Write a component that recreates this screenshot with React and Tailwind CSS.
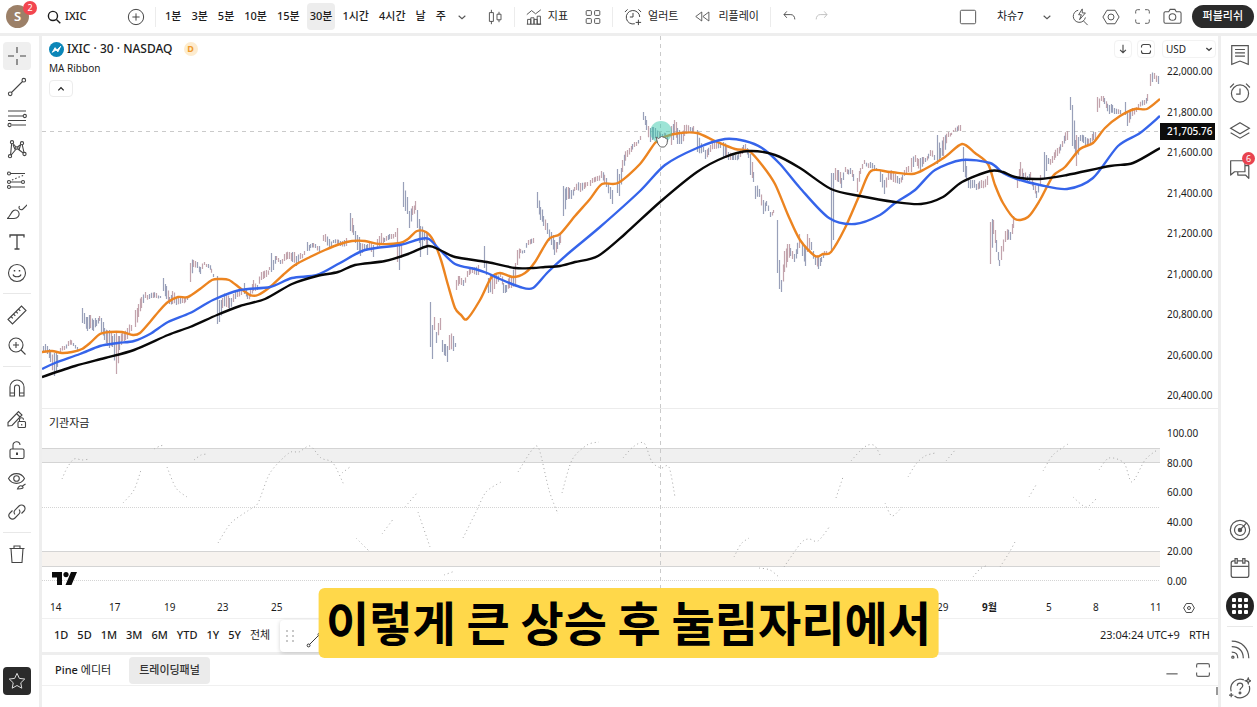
import React from "react";

/* ---------- chart data (x, high, low) ---------- */
const SESSIONS = [
  "43 346 353,47 346 354,50 352 362,54 353 376,57 355 367",
  "60 348 352,64 346 350,68 341 346,73 343 346,77 347 351",
  "82 308 323,84 313 324,87 317 331,90 315 328,93 320 331,96 320 326,99 316 321,101 318 332,104 328 340,109 330 348,112 336 347,116 332 374,119 336 350,122 333 341,127 328 339,131 325 331",
  "135 310 327,138 304 317,141 297 308,145 292 298,149 294 299,156 293 298,160 296 298",
  "163 278 291,166 286 299,169 297 304,172 291 304,176 298 305,182 296 303,187 296 300",
  "190 263 282,193 260 267,197 262 268,200 267 274,204 262 265,208 264 268,213 274 277",
  "217 276 324,219 300 322,222 298 308,226 293 307,229 298 309,233 294 302,237 291 297,241 289 295",
  "244 283 294,247 294 299,250 290 297,253 280 291,257 285 290,261 272 280,266 270 277,269 267 270",
  "271 253 272,273 260 270,276 256 260,280 260 264,284 254 261,289 252 259,292 252 262,296 256 266,300 253 259,304 251 255",
  "307 242 251,310 244 248,315 244 248,319 246 252",
  "323 235 241,325 234 242,329 239 249,333 240 243,340 241 246,346 238 246",
  "350 213 231,353 225 235,357 235 250,360 243 256,364 244 250,369 241 248,373 245 257",
  "377 239 249,381 233 243,384 238 242,391 234 239,395 232 237,397 228 262,399 246 270,401 245 258",
  "403 182 207,407 197 214,409 211 228,412 206 215,415 201 210,417 210 228,420 226 257,424 231 241,427 232 255",
  "430 302 347,432 325 359,434 317 330,436 332 343,440 318 330,442 340 352,445 344 356,447 346 362,449 335 350,453 336 351,455 343 347",
  "456 280 290,459 276 284,463 280 286,467 271 277,472 267 273,478 265 275",
  "484 246 268,486 262 275,488 278 293,492 276 294,496 275 284,500 272 277,503 283 293,506 285 292,509 276 288",
  "511 276 288,515 263 285,517 250 265,520 249 253,524 250 253,528 240 245,533 238 243",
  "537 192 208,540 207 220,543 216 226,547 223 234,551 232 245,554 240 255,557 242 249,560 235 243",
  "563 186 216,566 187 200,571 190 199,574 187 191,580 183 192,587 182 186",
  "590 180 186,592 178 183,597 176 181,601 171 178,606 178 187,612 190 204",
  "617 169 193,619 174 196,622 160 172,627 150 157,634 142 147,640 136 140",
  "643 112 120,646 120 130,650 128 142,655 128 138,662 134 142,667 136 142",
  "671 126 145,674 120 134,677 128 144,681 132 144,684 125 136,690 127 131,693 126 133",
  "697 130 152,703 147 152,705 150 159,710 145 152,714 140 149,720 143 148",
  "723 142 158,728 152 160,735 155 160,740 150 157,745 144 150,748 150 158",
  "750 154 175,753 172 182,755 186 199,759 189 197,763 200 214,766 201 206,770 212 217,773 210 213",
  "777 220 273,779 260 289,781 280 292,784 251 272,787 244 262,790 248 256,794 254 262,799 234 248",
  "802 242 256,805 247 266,807 234 252,811 242 250,815 256 265,818 257 269,821 257 262,826 251 254",
  "831 173 250,833 173 240,835 168 180,838 170 182,841 178 188,845 167 172,850 168 174,853 174 181",
  "857 178 192,860 168 174,864 160 164,870 162 168,876 168 171",
  "880 170 182,884 180 194,888 173 180,893 172 182,899 178 184,904 170 176,908 166 172",
  "911 158 172,915 155 162,920 158 170,925 158 162,930 150 156,934 155 160",
  "937 135 164,940 148 158,943 137 156,948 132 137,953 130 132,960 125 131",
  "963 147 172,966 166 180,968 178 188,972 180 188,976 184 190,981 180 188,987 176 185",
  "990 222 264,993 220 234,996 240 252,999 260 266,1001 246 260,1005 231 242,1010 232 240,1013 216 228",
  "1017 178 188,1020 162 176,1023 173 180,1027 176 182,1030 172 180,1033 182 190,1036 191 198,1040 175 186",
  "1044 152 178,1048 158 164,1052 156 163,1057 148 156,1062 141 147,1067 131 140",
  "1070 97 110,1072 105 146,1075 140 154,1076 135 166,1080 135 141,1085 137 145,1090 138 144,1095 132 140",
  "1097 97 112,1101 96 101,1104 98 104,1109 105 114,1114 108 114,1120 110 114",
  "1125 102 115,1127 112 126,1132 108 116,1138 104 108,1144 100 105,1147 94 101",
  "1150 74 86,1154 73 79,1158 76 84",
];

const MA = {
  fast: "42,352 52,351 62,353 72,352 82,349 90,343 100,334 110,332 122,332 133,335 140,333 150,322 160,310 168,302 178,297 188,297 200,289 212,280 220,279 229,280 240,288 250,295 258,295 270,287 283,275 295,265 310,257 325,250 340,244 352,241 365,241 380,244 400,243 408,239 417,231 426,232 433,240 441,260 448,285 455,308 461,315 467,319 480,300 491,278 500,273 513,277 525,273 535,262 549,239 560,234 575,216 590,199 602,184 618,183 640,164 655,143 664,137 680,133 697,133 715,141 735,149 749,151 762,165 775,184 788,215 800,240 815,256 823,254 831,252 845,228 860,194 871,171 890,172 912,174 925,169 945,157 962,144 975,153 988,164 995,185 1003,203 1015,219 1028,217 1040,200 1053,176 1065,167 1080,149 1093,143 1105,128 1120,116 1135,109 1147,109 1160,99",
  mid: "42,369 55,363 80,354 100,346 118,343 134,341 150,334 168,322 190,313 213,300 240,290 270,287 292,278 317,275 340,263 365,250 400,245 420,239 429,239 440,250 455,264 475,269 487,273 500,279 520,287 533,288 548,272 570,252 600,227 640,191 665,165 697,148 725,139 745,141 762,148 780,164 800,188 829,218 855,224 880,215 895,203 915,190 935,170 962,160 990,163 1003,173 1017,179 1040,185 1067,189 1093,178 1118,146 1140,133 1160,116",
  slow: "42,377 75,366 105,358 134,350 168,335 190,327 217,315 240,306 265,299 292,284 317,276 338,272 355,265 385,261 408,254 428,246 440,250 455,257 487,262 515,268 533,268 545,267 560,266 575,262 598,256 625,234 660,202 697,172 725,157 749,151 775,155 800,168 831,189 860,196 895,202 921,204 943,197 962,182 990,171 1003,172 1015,177 1040,179 1067,175 1110,166 1133,163 1160,148",
};

const OSCILLATOR = [
  "62,479 67,468 74,459 82,460 90,459",
  "123,503 134,490 141,470",
  "154,449 160,446 165,445",
  "167,467 176,488 187,497",
  "194,460 201,455 208,454",
  "218,543 231,523 249,510 258,503 270,473 289,453 299,452 310,446 321,458 333,463 344,485",
  "342,473 350,467",
  "356,538 370,552",
  "382,534 394,518",
  "405,507 417,493",
  "418,512 430,547",
  "444,575 455,571",
  "463,538 476,512 486,492 501,482",
  "518,472 532,450 539,449 549,490 558,514",
  "562,493 572,460 587,445 599,442",
  "623,458 633,447 644,443 652,462 661,468 669,467 675,497",
  "734,557 741,544 749,538",
  "759,568 770,570 780,578",
  "784,567 801,543 809,539 818,541 830,526",
  "836,498 843,477",
  "851,461 860,451 868,445 875,446 881,457",
  "885,503 892,516 902,507",
  "908,477 916,464 925,456 935,453",
  "946,461 956,449",
  "973,577 980,569 988,565",
  "1000,567 1009,553 1016,540",
  "1029,497 1036,485",
  "1043,471 1053,455 1068,444",
  "1073,497 1086,507 1097,498",
  "1099,470 1109,458 1124,463 1132,482 1145,460 1157,450",
];

function buildBars() {
  const bars = [];
  SESSIONS.forEach((session, s) => {
    const keys = session.split(",").map((k) => k.split(" ").map(Number));
    keys.forEach(([x, hi, lo], i) => {
      const next = keys[i + 1];
      const prev = keys[i - 1] || keys[i + 1];
      const rising = i === 0 ? next[1] < hi : hi < prev[1];
      bars.push({ x, hi, lo, rising });
      if (next && next[0] - x > 2) {
        const n = Math.round((next[0] - x) / 2);
        for (let j = 1; j < n; j++) {
          const t = j / n;
          const wob = ((i * 7 + j * 5 + s) % 5) - 2;
          bars.push({
            x: Math.round(x + (next[0] - x) * t),
            hi: hi + (next[1] - hi) * t + wob,
            lo: lo + (next[2] - lo) * t + wob * 0.6,
            rising: (i + j + s) % 3 === 0 ? !rising : rising,
          });
        }
      }
    });
  });
  return bars;
}
const BARS = buildBars();
const barPath = (rising) =>
  BARS.filter((b) => b.rising === rising)
    .map((b) => `M${b.x + 0.5} ${b.hi.toFixed(1)}V${b.lo.toFixed(1)}`)
    .join("");

/* Catmull-Rom spline through the given points */
function smooth(points) {
  const p = points.split(" ").map((s) => s.split(",").map(Number));
  let d = `M${p[0][0]} ${p[0][1]}`;
  for (let i = 0; i < p.length - 1; i++) {
    const a = p[i - 1] || p[i];
    const b = p[i];
    const c = p[i + 1];
    const e = p[i + 2] || c;
    const k = 7;
    d += `C${b[0] + (c[0] - a[0]) / k} ${b[1] + (c[1] - a[1]) / k} ${c[0] - (e[0] - b[0]) / k} ${c[1] - (e[1] - b[1]) / k} ${c[0]} ${c[1]}`;
  }
  return d;
}

/* ---------- icons ---------- */
function Icon({ className = "size-5", children, box = "0 0 20 20" }) {
  return (
    <svg viewBox={box} className={`shrink-0 ${className}`} fill="none" stroke="currentColor" strokeWidth="1.1" aria-hidden="true">
      {children}
    </svg>
  );
}

const TOOLS = [
  [
    ["십자선", <path d="M10 1v6M10 13v6M1 10h6M13 10h6" />],
    ["추세선", <><circle cx="3.2" cy="16.8" r="1.8" /><circle cx="16.8" cy="3.2" r="1.8" /><path d="M4.5 15.5l11-11" /></>],
    ["피보나치", <><path d="M1 3h18M1 8h15M1 12.5h18M5 17h14" /><circle cx="17.8" cy="8" r="1.6" /><circle cx="2.6" cy="17" r="1.6" /></>],
    ["패턴", <><path d="M3.6 15.600L4.600 4.800M6 4.500l3 3.500M10.800 10l5.500 4M4.200 16l5-6M10.500 8L13.800 5.500M15.300 6l1.700 7.500" /><path d="M6 5.500l2 5M13.500 6L12 11" /><circle cx="5" cy="3.2" r="1.6" /><circle cx="15" cy="4.2" r="1.6" /><circle cx="3" cy="17.2" r="1.6" /><circle cx="17.5" cy="15" r="1.6" /><circle cx="9.800" cy="9" r="1.200" /></>],
    ["예측", <><path d="M3.500 3.500H18M3.500 12h11M3.500 17H18" /><path d="M5 10L17 5" strokeDasharray="1.500 2" /><circle cx="2" cy="3.500" r="1.500" /><circle cx="2" cy="12" r="1.500" /><circle cx="2" cy="17" r="1.500" /><circle cx="16" cy="12" r="1.500" /></>],
    ["브러시", <><path d="M0 17.500c3-1 3.500-6 6.500-8 2.500-1.500 5 .3 5.500 2.500.5 2.500-1 5.500-5 5.500z" /><path d="M12.500 5c-1.500 2.500 1 5 3.500 3L21 3" /></>],
    ["텍스트", <path d="M3 5.500V3h14v2.500M10 3v14M7.500 17h5" strokeWidth="1.300" />],
    ["이모지", <><circle cx="10" cy="10" r="8.500" /><path d="M6 11.500c1 3 7 3 8 0" /><path d="M7.500 7v1.500M12.500 7v1.500" strokeWidth="1.500" /></>],
  ],
  [
    ["자", <path d="M1 14.500L14.500 1 19 5.500 5.500 19zM4 11.500l1.800 1.800M6.500 9l1.800 1.800M9 6.500l1.800 1.800M11.500 4l1.800 1.800" />],
    ["확대", <><circle cx="9" cy="9" r="7" /><path d="M14 14l4.500 4.500M9 6v6M6 9h6" /></>],
  ],
  [
    ["자석", <><path d="M3 18V9a7 7 0 0114 0v9h-4.500V9.500a2.500 2.500 0 00-5 0V18z" /><path d="M3 15h4.500M12.500 15H17" /></>],
    ["그리기 유지", <><path d="M1 13.500L11.500 2.500l3.500 3.500L5 16.500l-4 .5zM9.500 4.500L13 8" /><rect x="11" y="12.500" width="7.500" height="6" rx="1" /><path d="M12.500 12.500v-1.800a2 2 0 014 0M14.700 15v1.500" /></>],
    ["잠금", <><rect x="3" y="9" width="14" height="9.500" rx="1.500" /><path d="M6 9V5.500a3.500 3.500 0 017-.5" /><path d="M10 12.500v2.500" strokeWidth="2" /></>],
    ["숨기기", <><path d="M1.500 7.500C5 1 14 1 17.500 7.500 14 14 5 14 1.500 7.500z" /><circle cx="9.500" cy="7.500" r="2.800" /><path d="M10.500 18c1-3 3.500-4 5-2.500s0 2.500-5 2.500zM15.500 15l3-2" /></>],
    ["링크", <path d="M8 12.500a3.500 3.500 0 010-4.500l4-4a3.400 3.400 0 015 5l-2.500 2.500M12 7.500a3.500 3.500 0 010 4.500l-4 4a3.400 3.400 0 01-5-5L5.500 8.500" />],
  ],
  [["삭제", <path d="M2.500 4.500h15M4 4.500l1 14h10l1-14M7 4.500V2h6v2.500" />]],
];

const RAIL_TOP = [
  ["관심종목", <path d="M2.500 1.500h15v17L10 15.500l-7.500 3zM5.500 5h9M5.500 8h9M5.500 11h9" />],
  ["얼러트", <><circle cx="10" cy="10.500" r="7.800" /><path d="M10 6v5H6.500M1 5l3.500-3.500M19 5l-3.500-3.500" /></>],
  ["오브젝트", <path d="M10 2.500l8.500 5-8.500 5-8.500-5zM1.500 11.500l8.500 5 8.500-5" />],
];

function RailButton({ label, children }) {
  return (
    <button aria-label={label} className="flex h-[38px] w-full items-center justify-center text-[#555]">
      <Icon className="size-[22px]">{children}</Icon>
    </button>
  );
}

const Sep = ({ className = "" }) => <span className={`h-5 w-px shrink-0 bg-[#ececec] ${className}`} />;
const Chevron = () => (
  <Icon className="size-2.5 text-[#555]" box="0 0 12 12"><path d="M2 4.500L6 8l4-3.500" strokeWidth="1.300" /></Icon>
);

/* ---------- top bar ---------- */
function TopBar() {
  const intervals = ["1분", "3분", "5분", "10분", "15분", "30분", "1시간", "4시간", "날", "주"];
  return (
    <header className="flex h-[33px] shrink-0 items-center bg-white text-[11px]">
      <button aria-label="프로필" className="relative ml-1.5 mr-[18px] flex size-[23px] shrink-0 items-center justify-center rounded-full bg-[#9c8068] text-[13px] font-semibold text-white">
        S
        <span className="absolute -right-2 -top-1 flex size-[14px] items-center justify-center rounded-full bg-[#f2464f] text-[9px] font-normal">2</span>
      </button>
      <button className="flex w-[75px] items-center gap-1 font-medium">
        <Icon className="size-[14px]"><circle cx="8.500" cy="8.500" r="6.500" strokeWidth="2" /><path d="M13.500 13.500L19 19" strokeWidth="2" /></Icon>
        IXIC
      </button>
      <button aria-label="심볼 추가" className="ml-[5px] text-[#444]">
        <Icon className="size-[18px]"><circle cx="10" cy="10" r="8.500" /><path d="M10 6v8M6 10h8" /></Icon>
      </button>
      <Sep className="mx-[6px] ml-[10px]" />
      <nav className="flex shrink-0 items-center gap-1">
        {intervals.map((t) => (
          <button key={t} className={`h-[27px] whitespace-nowrap rounded px-[3px] font-medium ${t === "30분" ? "bg-[#ededed]" : ""}`}>{t}</button>
        ))}
      </nav>
      <button aria-label="간격 더보기" className="ml-2"><Chevron /></button>
      <button aria-label="캔들" className="ml-5 text-[#444]">
        <Icon className="size-4"><path d="M3 4.500h5v11H3zM5.500 1v3.500M5.500 15.500V19M12.500 6.500h5v7h-5zM15 3.500v3M15 13.500v3" /></Icon>
      </button>
      <Sep className="mx-[11px]" />
      <button className="flex items-center gap-1.5 whitespace-nowrap">
        <Icon className="size-4 text-[#444]"><path d="M1 7l6-5 5 4 6.500-5M2 19v-6h4v6M6 19v-8h4v8M10 19v-6h4v6M14 19V9h4v10zM1 19h18" /></Icon>
        지표
      </button>
      <button aria-label="레이아웃" className="ml-[17px] text-[#444]">
        <Icon className="size-4"><rect x="1.500" y="2" width="6.500" height="6" rx="1" /><rect x="12" y="2" width="6.500" height="6" rx="1" /><rect x="1.500" y="12" width="6.500" height="6" rx="1" /><rect x="12" y="12" width="6.500" height="6" rx="1" /></Icon>
      </button>
      <Sep className="mx-[11px]" />
      <button className="flex items-center gap-1.5 whitespace-nowrap">
        <Icon className="size-[18px] text-[#444]"><path d="M17.500 10A7.500 7.500 0 1012 17.500M10 5.500V10H6.500M1 4.500L4 1.500M19 4.500L16 1.500M16 13v6M13 16h6" /></Icon>
        얼러트
      </button>
      <button className="ml-[17px] flex items-center gap-2 whitespace-nowrap">
        <Icon className="size-[15px] text-[#444]"><path d="M9 4v12l-8-6zM18.500 4v12l-8-6z" /></Icon>
        리플레이
      </button>
      <Sep className="mx-[11px]" />
      <button aria-label="실행 취소" className="text-[#444]"><Icon className="size-4"><path d="M6 3L2.500 7 6 11M2.500 7H11c3 0 5 2.500 5 6" /></Icon></button>
      <button aria-label="다시 실행" className="ml-[15px] text-[#bbb]"><Icon className="size-4"><path d="M14 3l3.500 4L14 11M17.500 7H9c-3 0-5 2.500-5 6" /></Icon></button>

      <div className="ml-auto flex shrink-0 items-center pr-[3px] text-[#555]">
        <button aria-label="레이아웃 선택"><Icon className="size-[18px]"><rect x="1.500" y="2.500" width="17" height="15" rx="1.500" /></Icon></button>
        <button className="ml-5 flex items-center gap-[18px] whitespace-nowrap text-[#131722]">차슈7 <Chevron /></button>
        <button aria-label="빠른 찾기" className="ml-[19px]"><Icon className="size-[18px]"><path d="M8 2.500a6.800 6.800 0 108 8M14 14.500l4.500 4.500M12.500 1L8.500 7.500h3L9.500 13l6.500-7.500h-3.500z" /></Icon></button>
        <button aria-label="설정" className="ml-[13px]"><Icon className="size-[18px]"><path d="M5.500 2.500h9L19 10l-4.500 7.500h-9L1 10z" /><circle cx="10" cy="10" r="3.300" /></Icon></button>
        <button aria-label="전체 화면" className="ml-[14px]"><Icon className="size-[17px]"><path d="M2 6.500V4a2 2 0 012-2h3M13 2h3a2 2 0 012 2v2.500M18 13.500V16a2 2 0 01-2 2h-3M7 18H4a2 2 0 01-2-2v-2.500" /></Icon></button>
        <button aria-label="스냅샷" className="ml-3"><Icon className="size-[19px]"><path d="M2.500 5h3.500l1.500-2.500h5L14 5h3.500A1.500 1.500 0 0119 6.500v9a1.500 1.500 0 01-1.500 1.500h-15A1.500 1.500 0 011 15.500v-9A1.500 1.500 0 012.500 5z" /><circle cx="10" cy="10.500" r="3.500" /></Icon></button>
        <button className="ml-2.5 h-[23px] whitespace-nowrap rounded-full bg-[#2b2b2b] px-[11px] font-medium text-white">퍼블리쉬</button>
      </div>
    </header>
  );
}

/* ---------- side bars ---------- */
function ToolBar() {
  return (
    <aside className="flex w-[39px] shrink-0 flex-col bg-white pb-3 pl-[3px] pt-1 text-[#444]">
      {TOOLS.map((group, g) => (
        <div key={g} className="flex flex-col">
          {g > 0 && <hr className="my-[5px] w-7 border-[#e8e8e8]" />}
          {group.map(([label, art], i) => (
            <button key={label} aria-label={label} className="flex h-[31px] w-7 items-center justify-center">
              <span className={`flex size-7 items-center justify-center rounded ${g === 0 && i === 0 ? "bg-[#efefef]" : ""}`}>
                <Icon>{art}</Icon>
              </span>
            </button>
          ))}
        </div>
      ))}
      <button aria-label="즐겨찾기 툴바" className="mt-auto flex size-7 items-center justify-center rounded bg-[#2b2b2b] text-[#ddd]">
        <Icon className="size-[18px]"><path d="M10 1.500l2.600 5.600 6 .7-4.400 4.200 1.100 6L10 15l-5.300 3 1.100-6L1.400 7.800l6-.7z" /></Icon>
      </button>
    </aside>
  );
}

function RightRail() {
  return (
    <aside className="flex w-9 shrink-0 flex-col bg-white pl-[2px]">
      {RAIL_TOP.map(([label, art]) => <RailButton key={label} label={label}>{art}</RailButton>)}
      <div className="relative">
        <RailButton label="채팅">
          <path d="M1.500 2.500h13v10H5l-3.500 3zM14.500 7H18v11.500L15 15.500H8v-3" strokeLinejoin="round" />
        </RailButton>
        <span className="absolute right-[2px] top-[2px] flex size-[13px] items-center justify-center rounded-full bg-[#e8434f] text-[9px] text-white">6</span>
      </div>
      <div className="mt-auto">
        <RailButton label="스크리너"><circle cx="10" cy="10" r="8.800" /><circle cx="10" cy="10" r="5" /><path d="M10 10l6-6.500" /><circle cx="10" cy="10" r="1.500" fill="currentColor" /></RailButton>
        <RailButton label="캘린더"><rect x="2" y="3.500" width="16" height="15" rx="2" /><path d="M2 8.500h16" /><path d="M5.500 1.500h2v4h-2zM12.500 1.500h2v4h-2z" fill="#fff" /></RailButton>
        <button aria-label="제품" className="mx-auto my-[5px] flex size-7 items-center justify-center rounded-full bg-[#222]">
          <span className="grid grid-cols-3 gap-[2px]">
            {Array.from({ length: 9 }, (_, i) => <span key={i} className="size-1 rounded-[1px] bg-white" />)}
          </span>
        </button>
        <hr className="mx-1 mb-1 mt-1.5 border-[#e8e8e8]" />
        <RailButton label="스트림"><path d="M2.500 2C11.500 2 18 8.500 18 17.500M2.500 7C9 7 13 11 13 17.500M2.500 12c3.500 0 5.500 2 5.500 5.500" /><circle cx="3.500" cy="16.500" r="1" /></RailButton>
        <RailButton label="도움말"><path d="M13.500 2.600A8.600 8.600 0 002 13M18.400 8A8.600 8.600 0 015 17.200" /><path d="M7.500 8a2.500 2.500 0 115 0c0 2-2.500 1.800-2.500 4" /><circle cx="10" cy="14.500" r=".8" /><path d="M17.500 1l.7 1.800L20 3.500l-1.800.7-.7 1.800-.7-1.800-1.800-.7 1.800-.7z" /><path d="M2 14.500v4M0 16.500h4" /></RailButton>
      </div>
    </aside>
  );
}

/* ---------- chart ---------- */
function PricePane() {
  const prices = ["22,000.00", "21,800.00", "21,600.00", "21,400.00", "21,200.00", "21,000.00", "20,800.00", "20,600.00", "20,400.00"];
  return (
    <section className="relative flex min-h-0 flex-[372]">
      <div className="relative min-w-0 flex-1">
        <svg viewBox="42 36 1118 372" preserveAspectRatio="none" className="absolute inset-0 size-full" fill="none" role="img" aria-label="IXIC 30분 차트">
          <path d="M42 131.500H1160M660.500 36V408" stroke="#cacaca" strokeDasharray="4 4" />
          <path d={barPath(false)} stroke="#8088a8" strokeWidth="1.200" opacity=".8" />
          <path d={barPath(true)} stroke="#b8949f" strokeWidth="1.200" opacity=".85" />
          <g strokeWidth="2.400" strokeLinejoin="round">
            <path d={smooth(MA.fast)} stroke="#ec8420" />
            <path d={smooth(MA.mid)} stroke="#3564ea" />
            <path d={smooth(MA.slow)} stroke="#080808" />
          </g>
          <circle cx="661" cy="132" r="11" fill="#3cc9ae" opacity=".5" />
          <path d="M656 137l2.500 1.500 3-2 3 1 3 2-.5 4.500-2.500 3h-4l-2.500-3z" fill="#fff" stroke="#666" strokeWidth="1" />
        </svg>
        <div className="absolute left-[7px] top-[5px] flex flex-col items-start">
          <div className="flex h-4 items-center text-[12px]">
            <svg viewBox="0 0 16 16" className="mr-[3px] size-[15px]" aria-hidden="true">
              <circle cx="8" cy="8" r="8" fill="#0b86b8" />
              <path d="M3.500 11l3-5 2 2.500L12.500 4.500 9.500 10.500 7.500 8.500z" fill="#fff" stroke="#fff" strokeLinejoin="round" />
            </svg>
            <h1 className="font-medium">IXIC · 30 · NASDAQ</h1>
            <span className="ml-[11px] flex size-[14px] items-center justify-center rounded-full bg-[#fdeccf] text-[9px] font-bold text-[#ef9a2d]">D</span>
          </div>
          <p className="mt-1 text-[10px] leading-[14px]">MA Ribbon</p>
          <button aria-label="범례 접기" className="mt-[5px] flex h-[17px] w-6 items-center justify-center rounded border border-[#ececec] bg-white">
            <Icon className="size-2" box="0 0 12 12"><path d="M2 8l4-4 4 4" strokeWidth="1.800" /></Icon>
          </button>
        </div>
        <div className="absolute right-[5px] top-1 flex gap-[5px]">
          <button aria-label="아래로" className="flex size-[18px] items-center justify-center rounded border border-[#f2f2f2] bg-white text-[#444]">
            <Icon className="size-2.5" box="0 0 12 12"><path d="M6 1v9.500M2.500 7L6 10.500 9.500 7" strokeWidth="1.300" /></Icon>
          </button>
          <button aria-label="최대화" className="flex size-[18px] items-center justify-center rounded border border-[#f2f2f2] bg-white text-[#444]">
            <Icon className="size-3" box="0 0 12 12"><path d="M1.500 4.500v-1a2 2 0 012-2h5a2 2 0 012 2v1M1.500 7.500v1a2 2 0 002 2h5a2 2 0 002-2v-1" /></Icon>
          </button>
        </div>
      </div>
      <div className="flex w-[58px] shrink-0 flex-col pb-[6px] pt-1 text-[10px]">
        <div className="relative mx-[2px] mb-[6px] flex h-[18px] items-center rounded border border-[#f2f2f2]">
          <select aria-label="통화" className="h-4 w-full appearance-none bg-transparent pl-[3px] text-[10px] leading-4 outline-none">
            <option>USD</option>
          </select>
          <span className="pointer-events-none absolute right-[2px]">
            <Icon className="size-2 text-[#444]" box="0 0 12 12"><path d="M2 4.500L6 8l4-3.500" strokeWidth="2" /></Icon>
          </span>
        </div>
        <div className="flex flex-1 flex-col justify-between pl-[7px]">
          {prices.map((p) => <span key={p} className="leading-[14px]">{p}</span>)}
        </div>
      </div>
      <span className="absolute right-[3px] top-[23.4%] flex h-[17px] w-[55px] items-center bg-[#0c0c0c] pl-[7px] text-[10px] font-medium text-white">21,705.76</span>
    </section>
  );
}

function FlowPane() {
  const levels = ["100.00", "80.00", "60.00", "40.00", "20.00", "0.00"];
  return (
    <section className="flex min-h-0 flex-[188] border-t border-[#ececec]">
      <div className="relative min-w-0 flex-1">
        <svg viewBox="42 409 1118 188" preserveAspectRatio="none" className="absolute inset-0 size-full" fill="none" role="img" aria-label="기관자금 지표">
          <path d="M42 448h1118v15H42z" fill="#f0f0f0" />
          <path d="M42 551h1118v15H42z" fill="#f7f3ef" />
          <path d="M42 448.500h1118M42 462.500h1118M42 551.500h1118M42 566.500h1118" stroke="#d4d4d4" />
          <path d="M42 507.500h1118M42 580.500h1118" stroke="#d4d4d4" strokeDasharray="1 1" />
          {OSCILLATOR.map((pts) => <path key={pts} d={smooth(pts)} stroke="#a8a8a8" strokeDasharray="1 3" />)}
          <path d="M660.500 409V597" stroke="#cacaca" strokeDasharray="4 4" />
        </svg>
        <h2 className="absolute left-[7px] top-[7px] text-[11px] leading-[14px]">기관자금</h2>
        <svg viewBox="0 0 25 14" className="absolute bottom-[11px] left-[10px] h-[14px] w-[25px]" role="img" aria-label="TradingView">
          <path d="M0 0h10v13H5V5.500H0zM19 0h6l-5.500 13h-6z" fill="#0b0b0b" />
          <circle cx="14" cy="2.600" r="2.600" fill="#0b0b0b" />
        </svg>
      </div>
      <div className="flex w-[58px] shrink-0 flex-col justify-between pb-[9px] pl-[7px] pt-[17px] text-[10px]">
        {levels.map((l) => <span key={l} className="leading-[14px]">{l}</span>)}
      </div>
    </section>
  );
}

function TimeAxis() {
  const ticks = ["14", "17", "19", "23", "25", "29", "9월", "5", "8", "11"];
  return (
    <div className="flex h-[22px] shrink-0 items-center border-b border-[#f0f0f0] text-[10px]">
      <div className="grid flex-1 grid-cols-[59fr_55fr_53fr_54fr_666fr_45fr_64fr_47fr_57fr_10fr] pl-2">
        {ticks.map((t) => <span key={t} className={`min-w-0 whitespace-nowrap ${t === "9월" ? "font-bold" : ""}`}>{t}</span>)}
      </div>
      <button aria-label="축 설정" className="flex w-[58px] shrink-0 justify-center text-[#444]">
        <Icon className="size-3"><path d="M5.500 2.500h9L19 10l-4.500 7.500h-9L1 10z" strokeWidth="1.600" /><circle cx="10" cy="10" r="2.500" strokeWidth="1.600" /></Icon>
      </button>
    </div>
  );
}

function RangeBar() {
  const ranges = ["1D", "5D", "1M", "3M", "6M", "YTD", "1Y", "5Y", "전체"];
  return (
    <div className="relative flex h-[33px] shrink-0 items-center justify-between pl-3 pr-2 text-[11px]">
      <div className="flex items-center gap-[9px]">
        {ranges.map((r) => <button key={r} className={`whitespace-nowrap ${r === "전체" ? "" : "font-medium"}`}>{r}</button>)}
      </div>
      <div className="flex items-center gap-[9px]">
        <button>23:04:24 UTC+9</button>
        <button>RTH</button>
      </div>
      <div className="absolute bottom-0 left-[238px] flex h-8 w-24 items-center gap-3 rounded bg-white pl-1.5 shadow-[0_1px_4px_rgba(0,0,0,0.18)]">
        <svg viewBox="0 0 8 12" className="h-3 w-2" fill="#c8c8c8" aria-hidden="true">
          <path d="M0 0h2v2H0zM6 0h2v2H6zM0 5h2v2H0zM6 5h2v2H6zM0 10h2v2H0zM6 10h2v2H6z" />
        </svg>
        <button aria-label="추세선 그리기" className="pt-2"><Icon className="size-4">{TOOLS[0][1][1]}</Icon></button>
      </div>
    </div>
  );
}

function BottomPanel() {
  return (
    <section className="relative h-[52px] shrink-0 bg-white text-[11px]">
      <div className="flex h-[31px] items-center border-b border-[#f0f0f0] pl-[13px] pr-[7px]">
        <button className="whitespace-nowrap"><span className="font-medium">Pine</span> 에디터</button>
        <button className="ml-[18px] h-[27px] whitespace-nowrap rounded bg-[#ebebeb] px-2.5 font-medium text-[#333]">트레이딩패널</button>
        <div className="ml-auto flex items-center gap-4 text-[#666]">
          <button aria-label="최소화"><Icon className="size-3.5"><path d="M2 15.500h16" strokeWidth="1.800" /></Icon></button>
          <button aria-label="패널 최대화"><Icon className="size-4"><path d="M2 7V4a2 2 0 012-2h12a2 2 0 012 2v3M18 13v3a2 2 0 01-2 2H4a2 2 0 01-2-2v-3" strokeWidth="1.500" /></Icon></button>
        </div>
      </div>
      <span className="absolute bottom-3 right-0 h-2 w-[2px] bg-[#999]" />
    </section>
  );
}

export default function App() {
  return (
    <div className="relative flex h-screen flex-col gap-[3px] overflow-hidden bg-[#eeeeee] font-['Noto_Sans','Noto_Sans_CJK_KR',sans-serif] text-[#1c1c1c]">
      <TopBar />
      <div className="flex min-h-0 flex-1 gap-[3px]">
        <ToolBar />
        <main className="flex min-w-0 flex-1 flex-col gap-[3px]">
          <div className="flex min-h-0 flex-1 flex-col bg-white">
            <PricePane />
            <FlowPane />
            <TimeAxis />
            <RangeBar />
          </div>
          <BottomPanel />
        </main>
        <RightRail />
      </div>
      <p className="absolute bottom-[49px] left-1/2 flex h-[70px] -translate-x-1/2 items-center whitespace-nowrap rounded-md bg-[#ffd84a] px-2 pb-1 font-['Noto_Sans_CJK_KR',sans-serif] text-[47px] font-bold text-black">
        이렇게 큰 상승 후 눌림자리에서
      </p>
    </div>
  );
}
